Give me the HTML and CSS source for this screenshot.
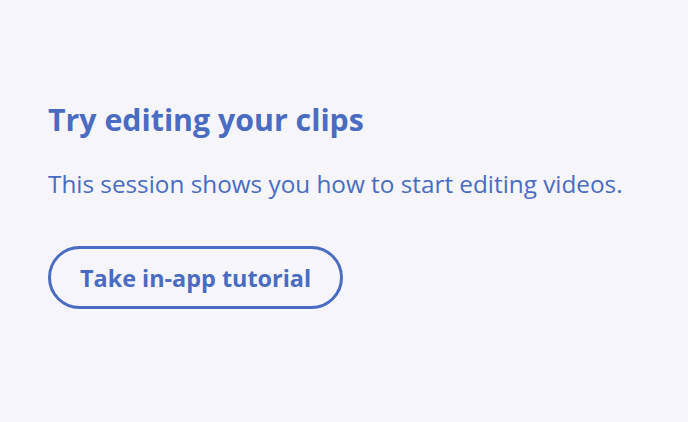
FILE: index.html
```html
<!DOCTYPE html>
<html lang="en">
<head>
<meta charset="utf-8">
<title>Try editing your clips</title>
<link rel="stylesheet" href="styles.css">
</head>
<body>
<main class="card">
  <h2 class="title">Try editing your clips</h2>
  <p class="desc">This session shows you how to start editing videos.</p>
  <button class="cta" type="button">Take in-app tutorial</button>
</main>
</body>
</html>
```

FILE: styles.css
```css
html, body {
  margin: 0;
  padding: 0;
  background: #f5f5fb;
  height: 100%;
}
.card {
  display: flex;
  flex-direction: column;
  align-items: flex-start;
  padding: 100px 48px 0 48px;
  font-family: "Open Sans", sans-serif;
  color: #4a6cc3;
}
.title {
  margin: 0;
  font-size: 30.3px;
  font-weight: 700;
  line-height: 40px;
}
.desc {
  margin: 29px 0 0 0;
  font-size: 24.3px;
  line-height: 30px;
  font-weight: 400;
}
.cta {
  margin-top: 47px;
  box-sizing: border-box;
  height: 63px;
  padding: 0 29px;
  border: 3px solid #4a6cc3;
  border-radius: 32px;
  background: transparent;
  color: #4a6cc3;
  font-family: "Open Sans", sans-serif;
  font-size: 23.4px;
  font-weight: 700;
}
```
